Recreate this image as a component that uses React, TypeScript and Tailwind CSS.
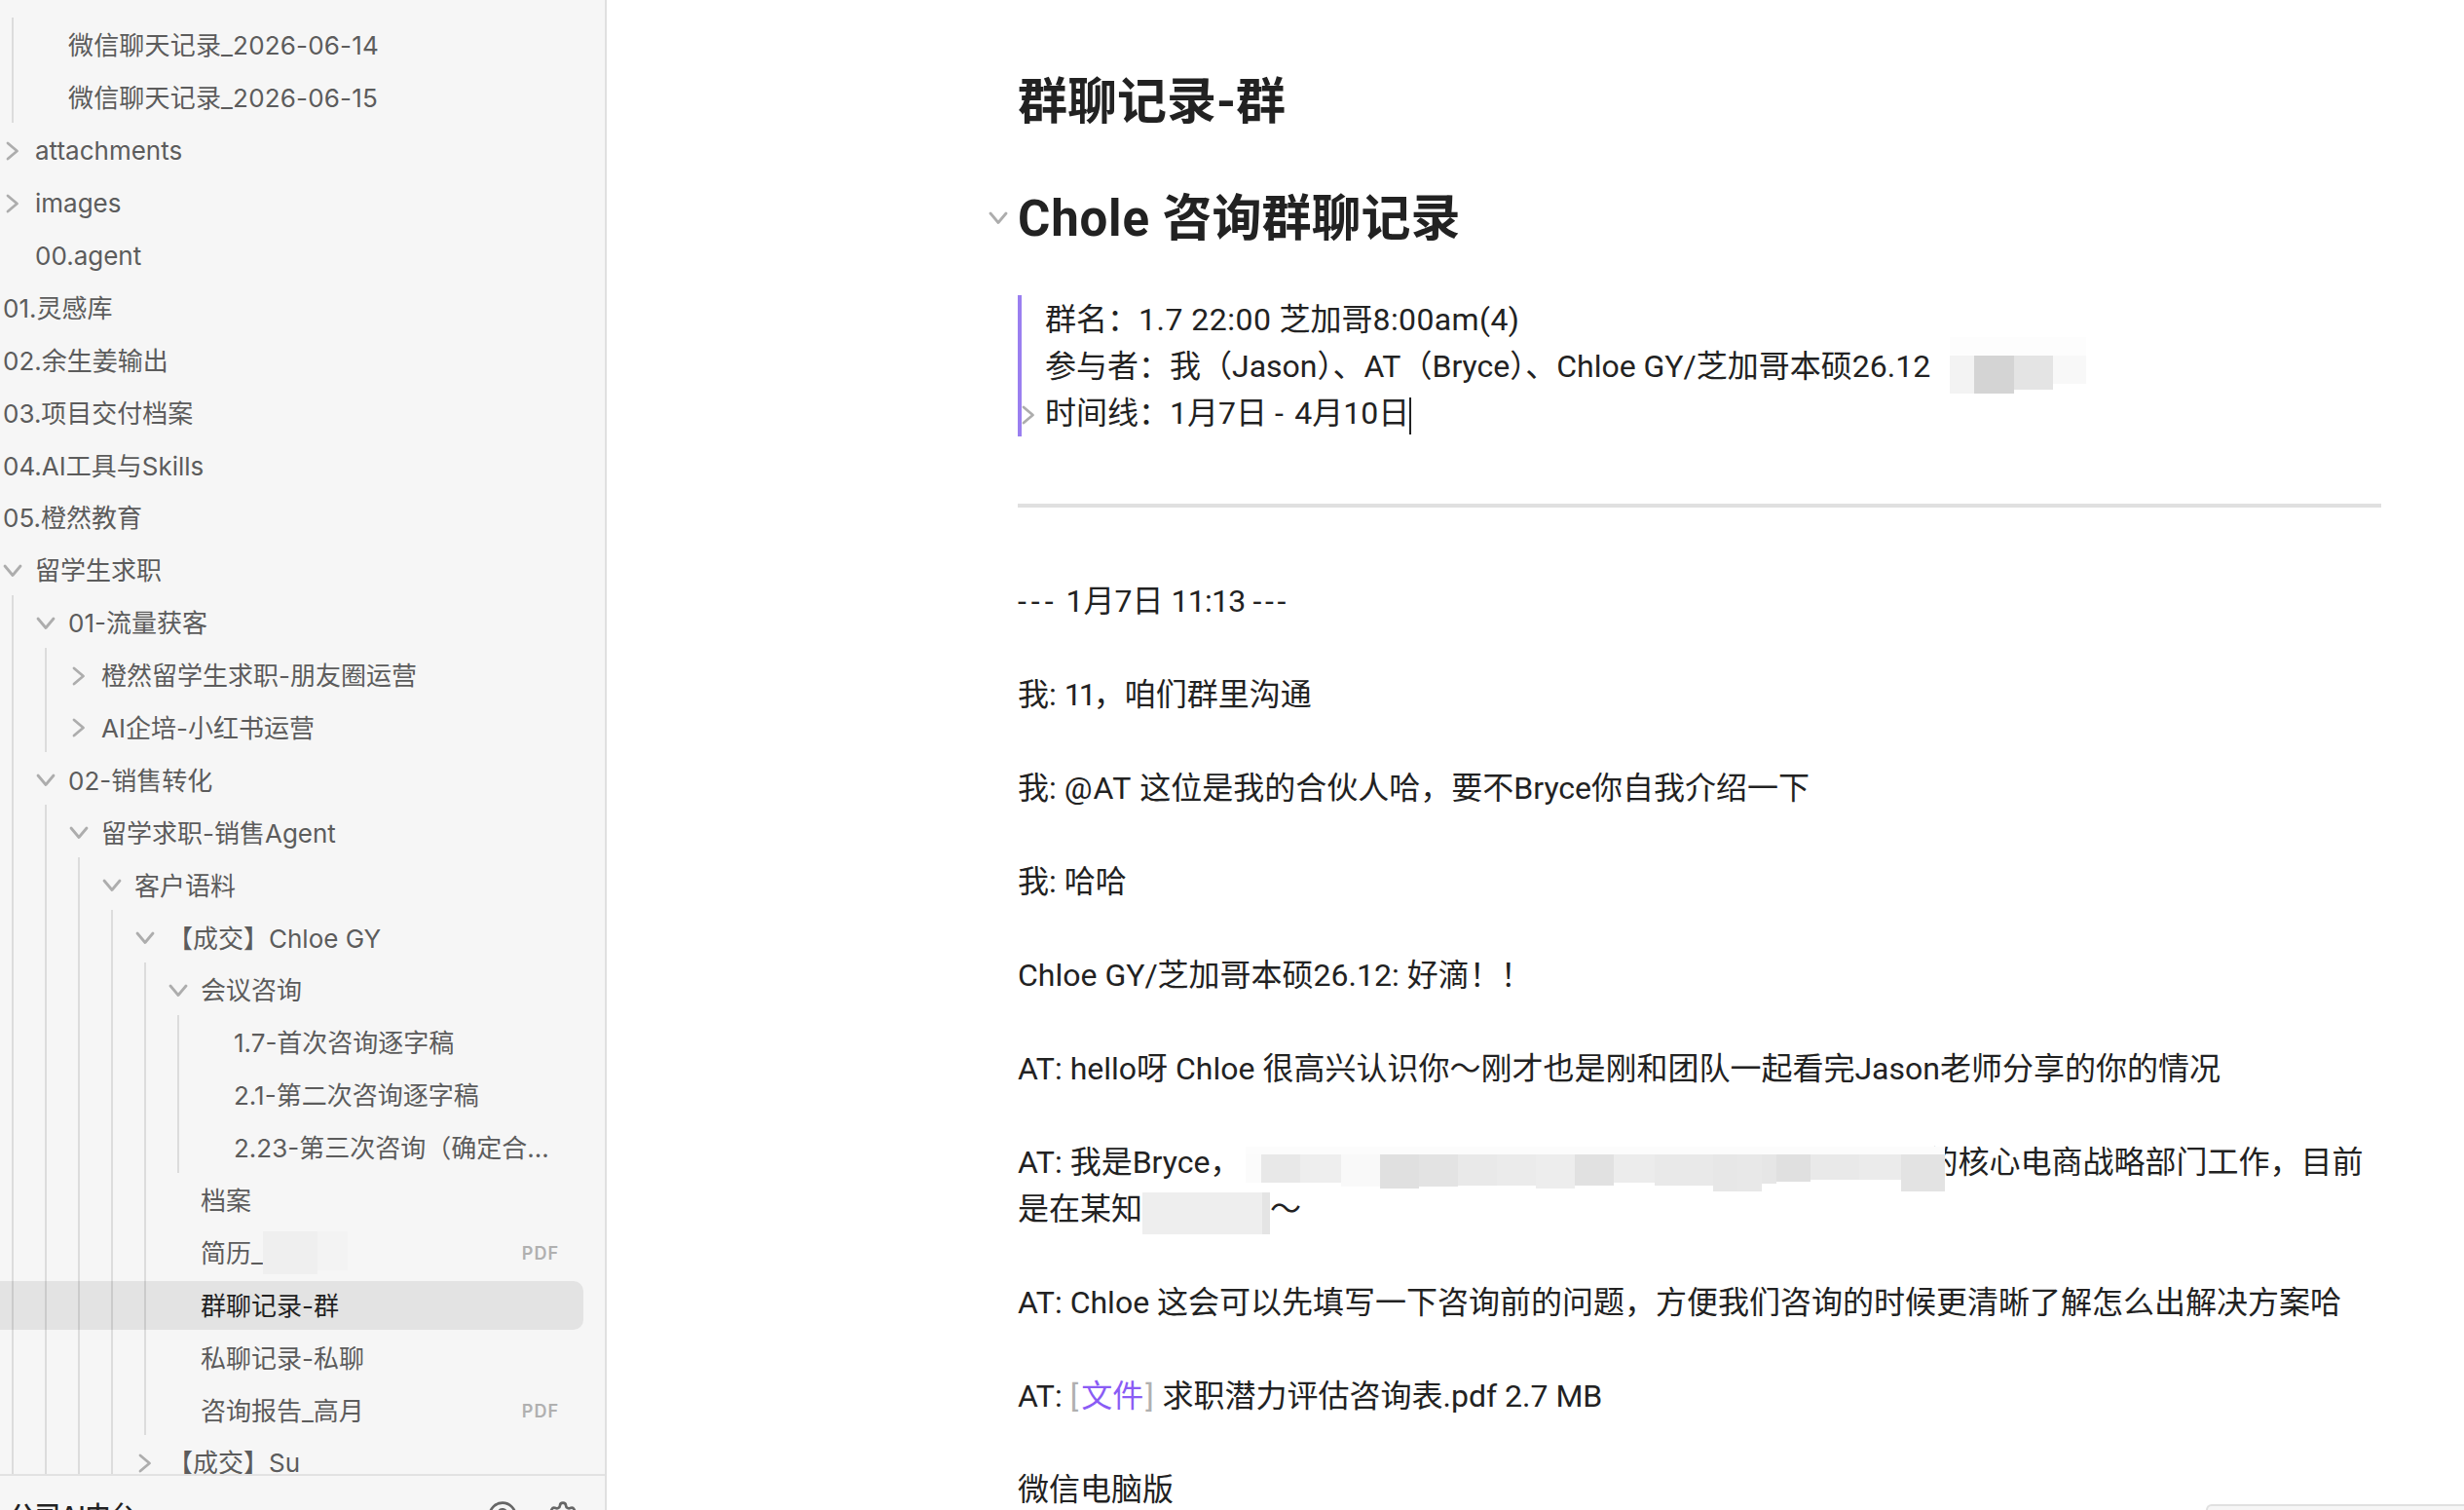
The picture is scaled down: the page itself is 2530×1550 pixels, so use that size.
import React from "react";
import { CircleHelp, Settings } from "lucide-react";

type Node = {
  label: string;
  open?: boolean;
  collapsed?: boolean;
  flush?: boolean;
  active?: boolean;
  pdf?: boolean;
  masked?: boolean;
  wide?: boolean;
  children?: Node[];
};

const tree: Node[] = [
  { label: "attachments", collapsed: true },
  { label: "images", collapsed: true },
  { label: "00.agent" },
  { label: "01.灵感库", flush: true },
  { label: "02.余生姜输出", flush: true },
  { label: "03.项目交付档案", flush: true },
  { label: "04.AI工具与Skills", flush: true },
  { label: "05.橙然教育", flush: true },
  {
    label: "留学生求职",
    open: true,
    children: [
      {
        label: "01-流量获客",
        open: true,
        children: [
          { label: "橙然留学生求职-朋友圈运营", collapsed: true },
          { label: "AI企培-小红书运营", collapsed: true },
        ],
      },
      {
        label: "02-销售转化",
        open: true,
        children: [
          {
            label: "留学求职-销售Agent",
            open: true,
            children: [
              {
                label: "客户语料",
                open: true,
                children: [
                  {
                    label: "【成交】Chloe GY",
                    open: true,
                    children: [
                      {
                        label: "会议咨询",
                        open: true,
                        children: [
                          { label: "1.7-首次咨询逐字稿" },
                          { label: "2.1-第二次咨询逐字稿" },
                          { label: "2.23-第三次咨询（确定合作）记录" },
                        ],
                      },
                      { label: "档案" },
                      { label: "简历_", pdf: true, masked: true },
                      { label: "群聊记录-群", active: true },
                      { label: "私聊记录-私聊" },
                      { label: "咨询报告_高月", pdf: true },
                    ],
                  },
                  { label: "【成交】Su", collapsed: true },
                ],
              },
            ],
          },
        ],
      },
    ],
  },
];

function Chevron({ open, className }: { open?: boolean; className?: string }) {
  return (
    <svg viewBox="0 0 20 20" className={className} fill="none" stroke="#adadad" strokeWidth="2.8" strokeLinecap="round" strokeLinejoin="round">
      {open ? <path d="M2 5 L10 14.5 L18 5" /> : <path d="M5 2 L14.5 10 L5 18" />}
    </svg>
  );
}

function Row({ node }: { node: Node }) {
  return (
    <div className="h-[53.9px] pt-[3.9px]">
      <div
        className={
          node.active
            ? "-ml-[170px] flex h-[50px] items-center rounded-r-[10px] bg-black/[.075] pl-[170px] text-[#222222]"
            : "flex h-[50px] items-center rounded-[10px] text-[#5c5c5c]"
        }
      >
        {node.flush ? (
          <div className="w-[3px] shrink-0" />
        ) : (
          <div className="flex w-[36px] shrink-0 items-center pl-[3px]">
            {(node.open || node.collapsed) && <Chevron open={node.open} className="h-[20px] w-[20px]" />}
          </div>
        )}
        <span className={node.wide ? "min-w-0 truncate pr-[30px] tracking-[0.18px]" : "min-w-0 truncate pr-[30px]"}>{node.label}</span>
        {node.masked && (
          <span className="-ml-[30px] flex h-[44px] w-[87px] shrink-0">
            <span className="h-[44px] w-[56px] bg-[#efefef]" />
            <span className="h-[40px] w-[31px] bg-[#f3f3f3]" />
          </span>
        )}
        {node.pdf && (
          <span className="ml-auto mr-[25px] shrink-0 text-[18px] font-semibold tracking-[1px] text-[#b0b0b0]">PDF</span>
        )}
      </div>
    </div>
  );
}

function Branch({ nodes }: { nodes: Node[] }) {
  return (
    <div>
      {nodes.map((n) => (
        <div key={n.label}>
          <Row node={n} />
          {n.children && (
            <div className="ml-[12px] border-l-2 border-[#dcdcdc] pl-[20px]">
              <Branch nodes={n.children} />
            </div>
          )}
        </div>
      ))}
    </div>
  );
}

function Sidebar() {
  return (
    <aside className="flex h-full w-[623px] shrink-0 flex-col overflow-hidden border-r-2 border-[#e0e0e0] bg-[#f6f6f6] text-[26px]">
      <div className="min-h-0 flex-1 overflow-hidden pr-[22px] pt-[18px]">
        <div className="ml-[12px] border-l-2 border-[#dcdcdc] pl-[20px]">
          <Branch nodes={[{ label: "微信聊天记录_2026-06-14", wide: true }, { label: "微信聊天记录_2026-06-15", wide: true }]} />
        </div>
        <Branch nodes={tree} />
      </div>
      <div className="flex h-[37px] shrink-0 items-start justify-between overflow-hidden border-t-2 border-[#e2e2e2] pl-[10px] pr-[27px] pt-[25px]">
        <span className="-mt-[2px] font-medium leading-[36px] text-[#222222]">公司AI中台</span>
        <div className="flex gap-[30px] text-[#666666]">
          <CircleHelp size={32} strokeWidth={2} />
          <Settings size={32} strokeWidth={2} />
        </div>
      </div>
    </aside>
  );
}

function LongMask() {
  return (
    <span className="absolute left-0 top-[-8px] z-10 flex w-[718px] flex-col">
      <span className="h-[8px] w-full bg-[#fcfcfc]" />
      <span className="flex items-start">
        <span className="h-[29px] w-[16px] bg-[#fbfbfb]" />
        <span className="h-[29px] w-[40px] bg-[#e8e8e8]" />
        <span className="h-[29px] w-[42px] bg-[#eeeeee]" />
        <span className="h-[33px] w-[40px] bg-[#f9f9f9]" />
        <span className="h-[35px] w-[40px] bg-[#e0e0e0]" />
        <span className="h-[33px] w-[40px] bg-[#e3e3e3]" />
        <span className="h-[32px] w-[40px] bg-[#e9e9e9]" />
        <span className="h-[32px] w-[40px] bg-[#ebebeb]" />
        <span className="h-[35px] w-[40px] bg-[#ededed]" />
        <span className="h-[32px] w-[40px] bg-[#e1e1e1]" />
        <span className="h-[29px] w-[42px] bg-[#ececec]" />
        <span className="h-[32px] w-[60px] bg-[#e9e9e9]" />
        <span className="h-[38px] w-[25px] bg-[#e7e7e7]" />
        <span className="h-[38px] w-[25px] bg-[#e8e8e8]" />
        <span className="h-[30px] w-[15px] bg-[#e6e6e6]" />
        <span className="h-[28px] w-[35px] bg-[#e0e0e0]" />
        <span className="h-[26px] w-[50px] bg-[#e9e9e9]" />
        <span className="h-[26px] w-[43px] bg-[#ebebeb]" />
        <span className="h-[38px] w-[45px] bg-[#e3e3e3]" />
      </span>
    </span>
  );
}

function QuoteMask() {
  return (
    <span className="absolute left-0 top-[-19px] flex w-[140px] flex-col">
      <span className="h-[19px] w-full bg-[#fdfdfd]" />
      <span className="flex items-start">
        <span className="h-[39px] w-[25px] bg-[#f3f3f3]" />
        <span className="h-[39px] w-[41px] bg-[#d4d4d4]" />
        <span className="h-[35px] w-[40px] bg-[#e4e4e4]" />
        <span className="h-[29px] w-[34px] bg-[#f8f8f8]" />
      </span>
    </span>
  );
}

function Content() {
  return (
    <main className="min-w-0 flex-1 bg-white pl-[422px] pr-[85px] pt-[74px] font-['Roboto','Noto_Sans_CJK_SC',sans-serif] text-[32px] leading-[48px] text-[#222222]">
      <h1 className="text-[51px] font-bold leading-[62px]">群聊记录-群</h1>
      <h2 className="relative mt-[58px] text-[51px] font-bold leading-[62px]">
        <Chevron open className="absolute left-[-30px] top-[20px] h-[20px] w-[20px]" />
        <span className="tracking-[0.8px]">Chole</span> 咨询群聊记录
      </h2>
      <blockquote className="relative mt-[47px] border-l-4 border-[#9a7ff0] pl-[24px] pt-[1px]">
        <Chevron className="absolute left-[-3px] top-[113px] h-[20px] w-[20px]" />
        <p>
          群名：<span className="tracking-[0.5px]">1.7 22:00</span> 芝加哥<span className="tracking-[0.4px]">8:00am(4)</span>
        </p>
        <p>
          参与者：我（Jason）、AT（Bryce）、Chloe GY/芝加哥本硕26.12
          <span className="relative ml-[20px] inline-block h-[48px] w-[140px] align-top">
            <span className="absolute left-0 top-[13px] block w-[140px]">
              <QuoteMask />
            </span>
          </span>
        </p>
        <p>
          时间线：1月7日 <span className="tracking-[3.5px]">-</span> 4月10日
          <span className="inline-block h-[38px] w-[2px] align-middle bg-[#222222]" />
        </p>
      </blockquote>
      <hr className="mt-[69px] h-[4px] border-0 bg-[#e0e0e0]" />
      <div className="mt-[72px] flex flex-col gap-[48px]">
        <p>
          <span className="tracking-[5px]">---</span> 1月7日 <span className="tracking-[-0.7px]">11:13</span> <span className="tracking-[3.6px]">---</span>
        </p>
        <p>
          我: <span className="tracking-[-3px]">11</span>，咱们群里沟通
        </p>
        <p>
          我: <span className="tracking-[1px]">@AT</span> 这位是我的合伙人哈，要不Bryce你自我介绍一下
        </p>
        <p>我: 哈哈</p>
        <p>Chloe GY/芝加哥本硕26.12: 好滴！！</p>
        <p>AT: hello呀 Chloe 很高兴认识你～刚才也是刚和团队一起看完Jason老师分享的你的情况</p>
        <p>
          AT: 我是Bryce，
          <span className="relative inline-block h-[48px] w-[704px] align-top">
            <span className="absolute left-[5px] top-[16px] block w-[718px]">
              <LongMask />
            </span>
          </span>
          的核心电商战略部门工作，目前
          <br />
          是在某知
          <span className="relative inline-block h-[48px] w-[131px] align-top">
            <span className="absolute left-0 top-[7px] flex h-[43px] w-[131px]">
              <span className="h-full w-[123px] bg-[#eeeeee]" />
              <span className="h-full w-[8px] bg-[#e4e4e4]" />
            </span>
          </span>
          ～
        </p>
        <p>AT: Chloe 这会可以先填写一下咨询前的问题，方便我们咨询的时候更清晰了解怎么出解决方案哈</p>
        <p>
          AT: <span className="tracking-[3px] text-[#b0b0b0]">[</span>
          <span className="text-[#8a5cf5]">文件</span>
          <span className="pl-[2px] text-[#b0b0b0]">]</span>
          <span className="pl-[1px]"> 求职潜力评估咨询表.pdf 2.7 MB</span>
        </p>
        <p>微信电脑版</p>
      </div>
    </main>
  );
}

export default function App() {
  return (
    <div
      lang="zh-CN"
      className="relative flex h-screen w-screen overflow-hidden bg-white font-['Inter','Noto_Sans_CJK_SC',sans-serif]"
    >
      <Sidebar />
      <Content />
      <div className="absolute bottom-0 right-0 h-[6px] w-[265px] rounded-tl-[10px] border-l-2 border-t-2 border-[#e0e0e0] bg-[#f6f6f6]" />
    </div>
  );
}
